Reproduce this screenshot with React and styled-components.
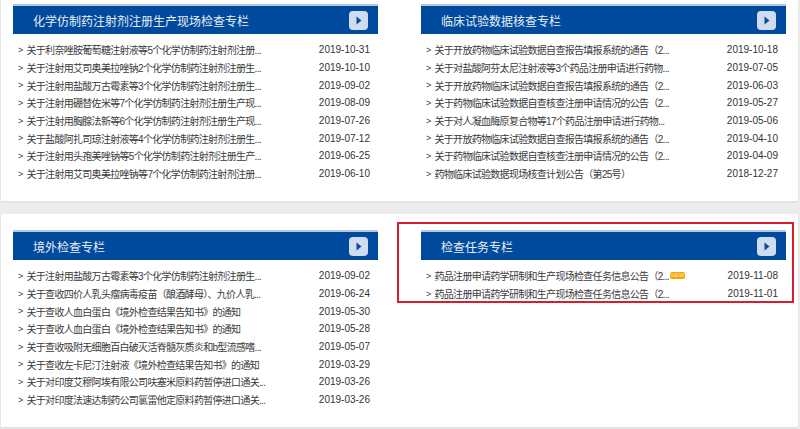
import styled, { createGlobalStyle } from 'styled-components';

const GlobalStyle = createGlobalStyle`
  html, body {
    margin: 0;
    padding: 0;
    background: #ececec;
  }
`;

const sections = [
  {
    title: '化学仿制药注射剂注册生产现场检查专栏',
    items: [
      ['关于利奈唑胺葡萄糖注射液等5个化学仿制药注射剂注册...', '2019-10-31'],
      ['关于注射用艾司奥美拉唑钠2个化学仿制药注射剂注册生...', '2019-10-10'],
      ['关于注射用盐酸万古霉素等3个化学仿制药注射剂注册生...', '2019-09-02'],
      ['关于注射用硼替佐米等7个化学仿制药注射剂注册生产现...', '2019-08-09'],
      ['关于注射用胸腺法新等6个化学仿制药注射剂注册生产现...', '2019-07-26'],
      ['关于盐酸阿扎司琼注射液等4个化学仿制药注射剂注册生...', '2019-07-12'],
      ['关于注射用头孢美唑钠等5个化学仿制药注射剂注册生产...', '2019-06-25'],
      ['关于注射用艾司奥美拉唑钠等7个化学仿制药注射剂注册...', '2019-06-10'],
    ],
  },
  {
    title: '临床试验数据核查专栏',
    items: [
      ['关于开放药物临床试验数据自查报告填报系统的通告（2...', '2019-10-18'],
      ['关于对盐酸阿芬太尼注射液等3个药品注册申请进行药物...', '2019-07-05'],
      ['关于开放药物临床试验数据自查报告填报系统的通告（2...', '2019-06-03'],
      ['关于药物临床试验数据自查核查注册申请情况的公告（2...', '2019-05-27'],
      ['关于对人凝血酶原复合物等17个药品注册申请进行药物...', '2019-05-06'],
      ['关于开放药物临床试验数据自查报告填报系统的通告（2...', '2019-04-10'],
      ['关于药物临床试验数据自查核查注册申请情况的公告（2...', '2019-04-09'],
      ['药物临床试验数据现场核查计划公告（第25号）', '2018-12-27'],
    ],
  },
  {
    title: '境外检查专栏',
    items: [
      ['关于注射用盐酸万古霉素等3个化学仿制药注射剂注册生...', '2019-09-02'],
      ['关于查收四价人乳头瘤病毒疫苗（酿酒酵母）、九价人乳...', '2019-06-24'],
      ['关于查收人血白蛋白《境外检查结果告知书》的通知', '2019-05-30'],
      ['关于查收人血白蛋白《境外检查结果告知书》的通知', '2019-05-28'],
      ['关于查收吸附无细胞百白破灭活脊髓灰质炎和b型流感嗜...', '2019-05-07'],
      ['关于查收左卡尼汀注射液《境外检查结果告知书》的通知', '2019-03-29'],
      ['关于对印度艾穆阿埃有限公司呋塞米原料药暂停进口通关...', '2019-03-26'],
      ['关于对印度法速达制药公司氯雷他定原料药暂停进口通关...', '2019-03-26'],
    ],
  },
  {
    title: '检查任务专栏',
    highlighted: true,
    items: [
      ['药品注册申请药学研制和生产现场检查任务信息公告（2...', '2019-11-08', true],
      ['药品注册申请药学研制和生产现场检查任务信息公告（2...', '2019-11-01'],
    ],
  },
];

const Section = ({ title, items, highlighted }) => (
  <Column>
    {highlighted && <RedFrame />}
    <Header>
      <HeaderTitle>{title}</HeaderTitle>
      <MoreButton>
        <svg width="6" height="9" viewBox="0 0 6 9">
          <path d="M0.5 0.5 L5.5 4.5 L0.5 8.5 Z" fill="#0b4a9a" />
        </svg>
      </MoreButton>
    </Header>
    <List>
      {items.map(([text, date, isNew], i) => (
        <Row key={i}>
          <Arrow>&gt;</Arrow>
          <RowText>{text}</RowText>
          {isNew && <NewBadge>NEW</NewBadge>}
          <RowDate>{date}</RowDate>
        </Row>
      ))}
    </List>
  </Column>
);

const App = () => {
  return (
    <Page>
      <GlobalStyle />
      <Band $height={201} $top={4}>
        <Section {...sections[0]} />
        <Section {...sections[1]} />
      </Band>
      <Band $height={213} $top={16}>
        <Section {...sections[2]} />
        <Section {...sections[3]} />
      </Band>
    </Page>
  );
};

export default App;

const Page = styled.div`
  width: 800px;
  height: 429px;
  overflow: hidden;
  display: flex;
  flex-direction: column;
  gap: 13px;
  font-family: 'Liberation Sans', 'Noto Sans CJK SC', sans-serif;
`;

const Band = styled.div`
  height: ${(p) => p.$height}px;
  margin: 0 2px 0 1px;
  box-sizing: border-box;
  padding: ${(p) => p.$top}px 12px 0;
  background: #fff;
  box-shadow: 0 1px 2px rgba(0, 0, 0, 0.08);
  display: flex;
  justify-content: space-between;
`;

const Column = styled.section`
  position: relative;
  width: 365px;
`;

const RedFrame = styled.div`
  position: absolute;
  top: -8px;
  left: -24px;
  width: 397px;
  height: 81px;
  box-sizing: border-box;
  border: 2px solid #dc1c2e;
`;

const Header = styled.div`
  height: 30px;
  box-sizing: border-box;
  border-top: 2px solid #b4c8dc;
  padding: 0 10px 0 20px;
  background: #004a9d;
  display: flex;
  align-items: center;
  justify-content: space-between;
`;

const HeaderTitle = styled.h2`
  margin: 0;
  font-size: 12px;
  font-weight: 400;
  color: #e8eff8;
`;

const MoreButton = styled.span`
  width: 19px;
  height: 19px;
  border-radius: 4px;
  background: #cfdbef;
  display: flex;
  align-items: center;
  justify-content: center;
`;

const List = styled.ul`
  margin: 7px 0 0;
  padding: 0 8px 0 5px;
  list-style: none;
`;

const Row = styled.li`
  height: 17.7px;
  display: flex;
  align-items: center;
  font-size: 10px;
  color: #3a3a3a;
  white-space: nowrap;
`;

const Arrow = styled.span`
  width: 8.5px;
  font-size: 9px;
`;

const RowText = styled.span`
  letter-spacing: -0.7px;
`;

const NewBadge = styled.span`
  width: 15px;
  height: 7px;
  margin-left: 1px;
  border-radius: 2px;
  background: #f5a50a;
  color: #ffe9b0;
  font-size: 6px;
  line-height: 7px;
  text-align: center;
`;

const RowDate = styled.span`
  margin-left: auto;
  font-size: 10px;
  color: #333;
`;
